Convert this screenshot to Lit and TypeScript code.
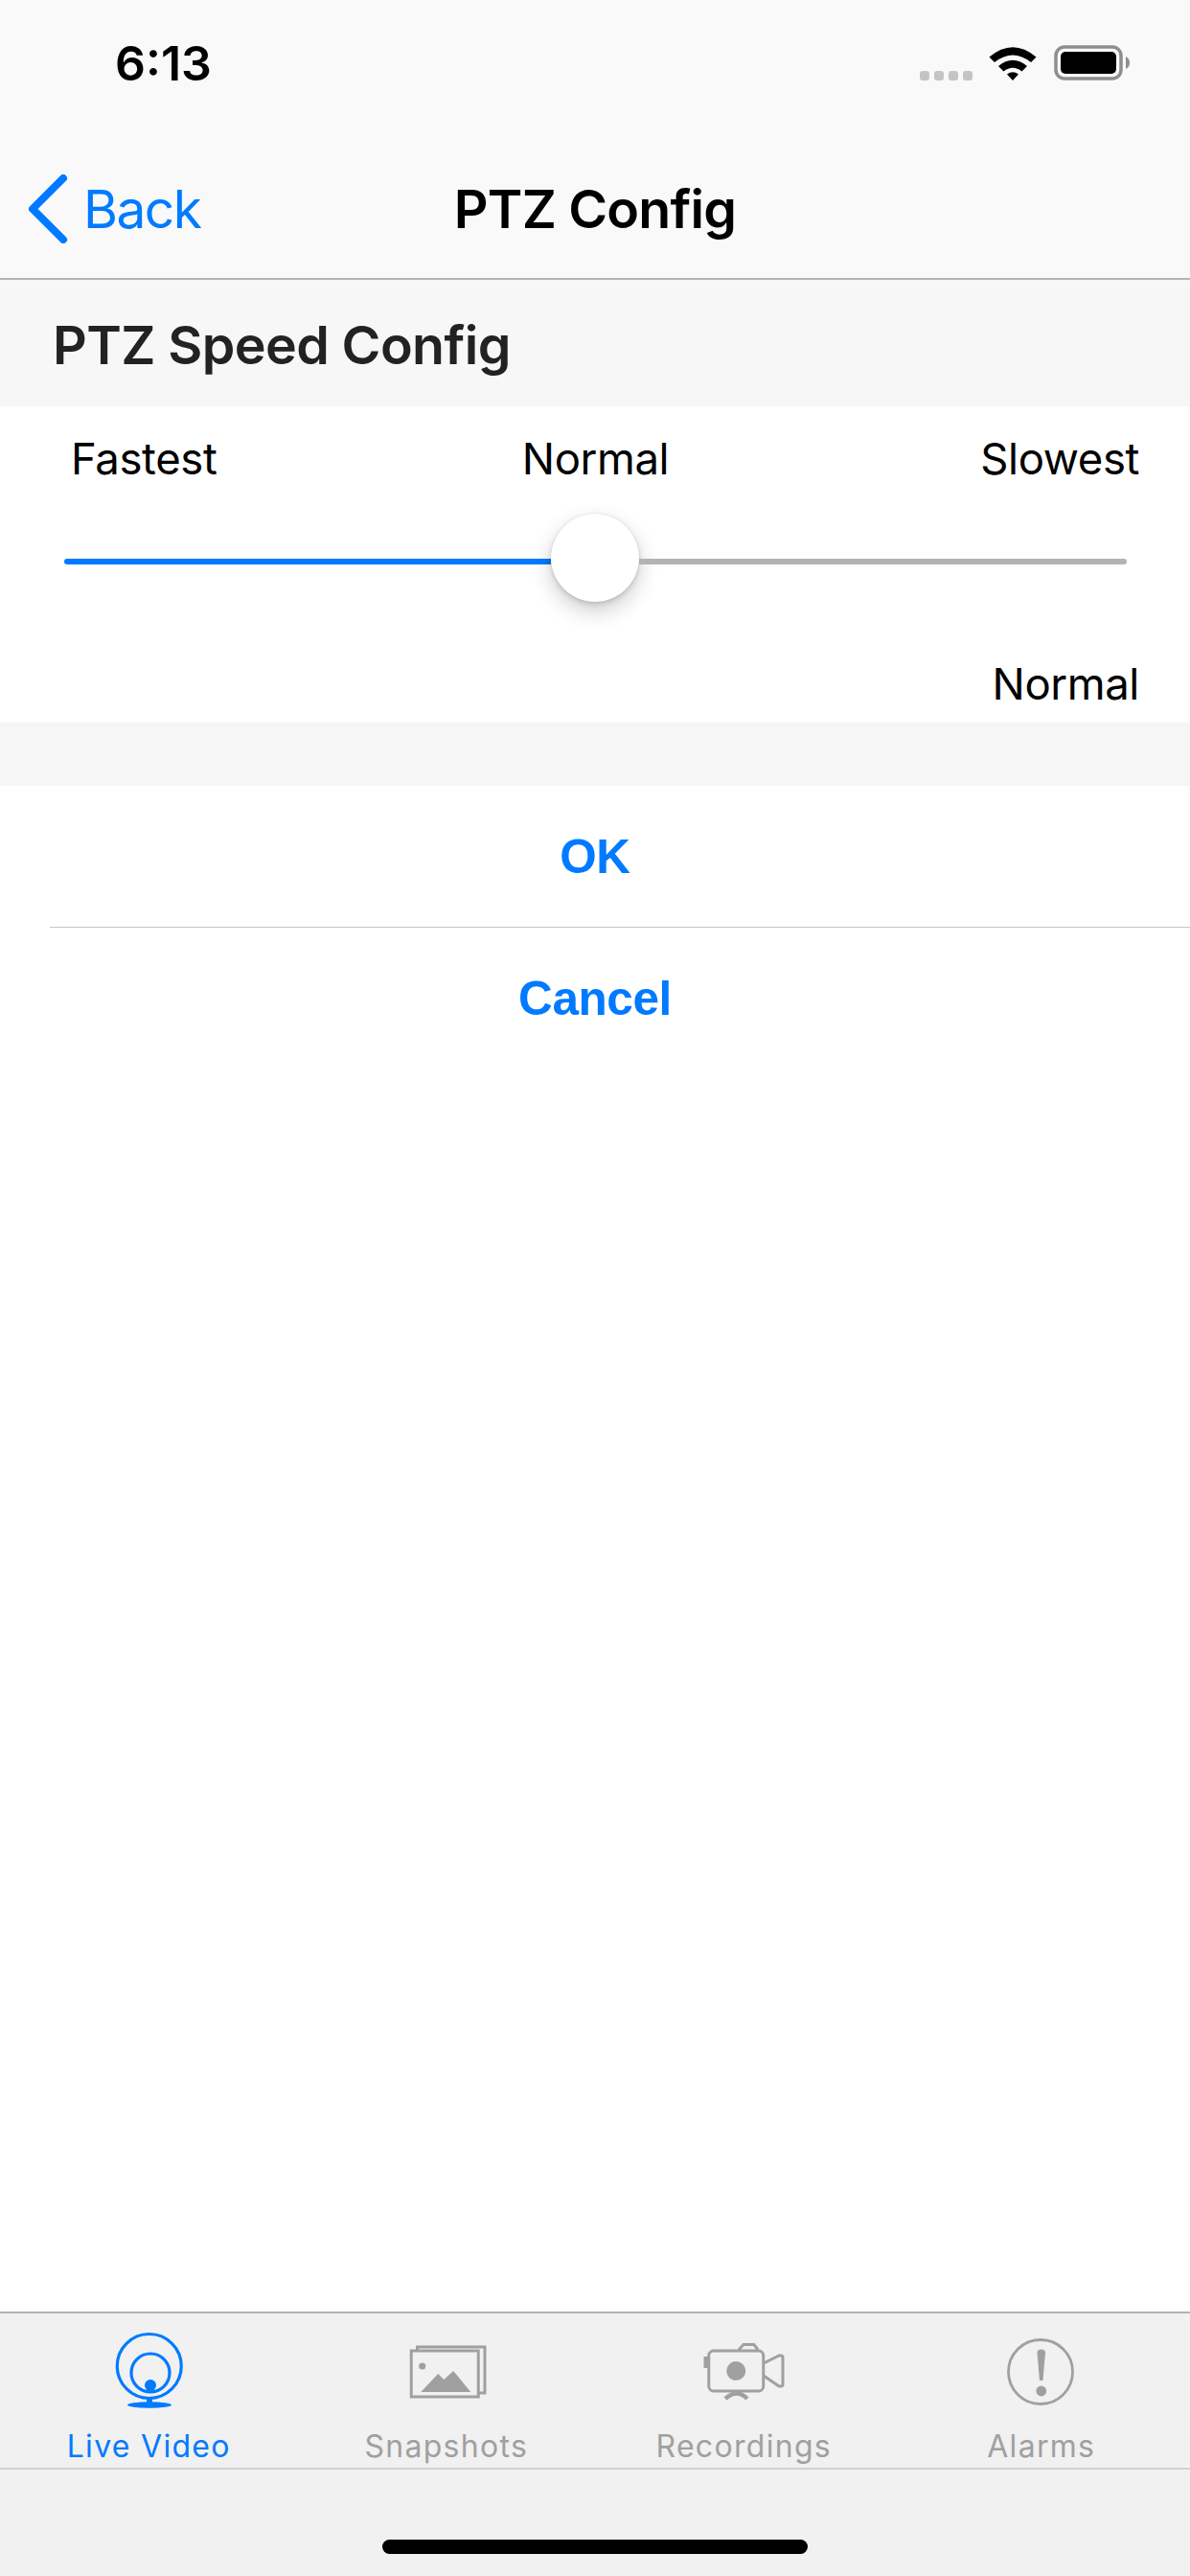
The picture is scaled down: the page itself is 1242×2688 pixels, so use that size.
import { LitElement, html, css, svg } from "lit";
import { customElement } from "lit/decorators.js";

const icons = [
  svg`<circle cx="50.75" cy="40" r="33.5" fill="none" stroke="currentColor" stroke-width="3.2"/>
      <circle cx="52" cy="47" r="20" fill="none" stroke="currentColor" stroke-width="3.2"/>
      <circle cx="52" cy="60" r="6" fill="currentColor"/>
      <rect x="48" y="73" width="6" height="6" fill="currentColor"/>
      <ellipse cx="51" cy="80.5" rx="23" ry="3.2" fill="currentColor"/>`,
  svg`<rect x="13.25" y="24" width="70" height="48" fill="none" stroke="currentColor" stroke-width="3"/>
      <path d="M19.5 23V20H90V68H84" fill="none" stroke="currentColor" stroke-width="3"/>
      <circle cx="24.75" cy="40" r="3.6" fill="currentColor"/>
      <path d="M23.25 67L41.25 48L47.25 54L57.25 45L75.25 67Z" fill="currentColor"/>`,
  svg`<rect x="13.75" y="24" width="57" height="42" rx="5" fill="none" stroke="currentColor" stroke-width="3"/>
      <path d="M45 23L50 17.5H61L65 23" fill="none" stroke="currentColor" stroke-width="3"/>
      <rect x="8.5" y="30" width="4.5" height="12" fill="currentColor"/>
      <circle cx="42.25" cy="45" r="10" fill="currentColor"/>
      <path d="M71 37L87 29H89Q91 29 91 31V59Q91 61 89 61H87L71 50" fill="none" stroke="currentColor" stroke-width="3" stroke-linejoin="round"/>
      <path d="M31 74Q43 63 54 74" fill="none" stroke="currentColor" stroke-width="4.5"/>`,
  svg`<circle cx="49" cy="46" r="33.5" fill="none" stroke="currentColor" stroke-width="2.8"/>
      <path d="M45.5 26Q45.5 22.5 49.8 22.5Q54 22.5 54 26L51.5 55H48Z" fill="currentColor"/>
      <circle cx="49.8" cy="66" r="5.4" fill="currentColor"/>`,
];

const tabs = ["Live Video", "Snapshots", "Recordings", "Alarms"];

@customElement("app-root")
export class AppRoot extends LitElement {
  static styles = css`
    :host { display: flex; flex-direction: column; width: 1242px; height: 2688px; background: #fff; font-family: Inter, "Liberation Sans", sans-serif; color: #000; overflow: hidden; }
    .status { height: 132px; flex: none; background: #f9f9f9; display: flex; justify-content: space-between; align-items: flex-start; padding: 0 62px 0 120px; box-sizing: border-box; }
    .time { font-size: 50px; font-weight: 600; line-height: 54px; margin-top: 39px; }
    .indicators { display: flex; align-items: flex-start; margin-top: 47px; }
    .dots { display: flex; gap: 5px; margin-top: 27px; margin-right: 17px; }
    .dots i { display: block; width: 10px; height: 10px; border-radius: 3px; background: #c4c4c4; }
    .wifi { width: 50px; height: 38px; margin-right: 18px; }
    .battery { width: 80px; height: 38px; }
    .nav { height: 160px; flex: none; box-sizing: border-box; background: #f9f9f9; border-bottom: 2px solid #b4b4b4; display: grid; grid-template-columns: 1fr auto 1fr; align-items: center; padding-top: 14px; }
    .back { display: flex; align-items: center; color: #007aff; font-size: 55px; line-height: 70px; padding-left: 29px; letter-spacing: -1.5px; }
    .back svg { width: 42px; height: 72px; margin-right: 16px; }
    .title { font-size: 55.5px; font-weight: 600; line-height: 70px; letter-spacing: -0.8px; }
    .section { height: 132px; flex: none; box-sizing: border-box; padding-top: 2px; background: #f7f7f7; display: flex; align-items: center; padding-left: 55px; font-size: 55.5px; font-weight: 600; color: #222; letter-spacing: -0.6px; }
    .slider-card { height: 330px; flex: none; display: flex; flex-direction: column; padding: 28px 53px 0 54px; box-sizing: border-box; }
    .labels { display: grid; grid-template-columns: 1fr auto 1fr; font-size: 45.5px; line-height: 54px; letter-spacing: -0.4px; }
    .labels span:first-child { padding-left: 20px; }
    .labels span:last-child { text-align: right; }
    .track-wrap { height: 92px; margin: 34px 13px 0; display: flex; align-items: center; }
    .fill { height: 6px; width: 508px; flex: none; background: #007aff; border-radius: 3px 0 0 3px; }
    .rest { height: 6px; flex: 1; background: #b3b3b3; border-radius: 0 3px 3px 0; }
    .thumb { width: 92px; height: 92px; border-radius: 50%; background: #fff; box-shadow: 0 9px 22px rgba(0,0,0,.2), 0 2px 5px rgba(0,0,0,.14), 0 0 1px rgba(0,0,0,.14); flex: none; margin-top: -8px; }
    .value { text-align: right; font-size: 45.5px; line-height: 54px; margin-top: 55px; letter-spacing: -0.4px; }
    .gap { height: 66px; flex: none; background: #f6f6f6; }
    .action { height: 147px; flex: none; display: flex; align-items: center; justify-content: center; color: #007aff; font-size: 49.5px; font-weight: 700; letter-spacing: -0.4px; font-family: "Liberation Sans", Inter, sans-serif; }
    .sep { height: 1px; flex: none; background: #c4c4c4; margin-left: 52px; }
    .spacer { flex: 1; }
    .tabbar { height: 276px; flex: none; box-sizing: border-box; background: #f1f1f1; border-top: 2px solid #b2b2b2; display: flex; flex-direction: column; }
    .tabs { display: grid; grid-template-columns: repeat(4, 1fr); height: 161px; border-bottom: 2px solid #d2d2d2; box-sizing: content-box; }
    .tab { display: flex; flex-direction: column; align-items: center; color: #a0a0a0; }
    .tab.active { color: #007aff; }
    .tab svg { width: 100px; height: 90px; margin-top: 15px; }
    .tab span { font-size: 32px; line-height: 36px; margin-top: 16px; letter-spacing: 1.3px; font-weight: 400; }
    .home-row { flex: 1; display: flex; justify-content: center; align-items: flex-start; padding-top: 73px; }
    .home { width: 444px; height: 15px; border-radius: 8px; background: #000; }
  `;

  render() {
    return html`
      <div class="status">
        <div class="time">6:13</div>
        <div class="indicators">
          <div class="dots"><i></i><i></i><i></i><i></i></div>
          <svg class="wifi" viewBox="0 0 50 38">
            <path d="M0.5 12.5Q25 -8 49.5 12.5L44 18Q25 3 6 18Z" fill="#000"/>
            <path d="M10 22Q25 9.5 40 22L34.5 27.5Q25 20 15.5 27.5Z" fill="#000"/>
            <path d="M19 30.5Q25 26 31 30.5L25 37Z" fill="#000"/>
          </svg>
          <svg class="battery" viewBox="0 0 80 38">
            <rect x="2" y="2" width="68" height="33" rx="9" fill="none" stroke="#8e8e8e" stroke-width="3.5"/>
            <rect x="7" y="7" width="58" height="23" rx="5" fill="#000"/>
            <path d="M75 12Q79 14 79 18.5Q79 23 75 25Z" fill="#8e8e8e"/>
          </svg>
        </div>
      </div>
      <div class="nav">
        <div class="back">
          <svg viewBox="0 0 42 72"><path d="M37 4L5 36L37 68" fill="none" stroke="#007aff" stroke-width="8" stroke-linecap="round" stroke-linejoin="round"/></svg>
          <span>Back</span>
        </div>
        <div class="title">PTZ Config</div>
        <div></div>
      </div>
      <div class="section">PTZ Speed Config</div>
      <div class="slider-card">
        <div class="labels"><span>Fastest</span><span>Normal</span><span>Slowest</span></div>
        <div class="track-wrap">
          <div class="fill"></div>
          <div class="thumb"></div>
          <div class="rest"></div>
        </div>
        <div class="value">Normal</div>
      </div>
      <div class="gap"></div>
      <div class="action">OK</div>
      <div class="sep"></div>
      <div class="action">Cancel</div>
      <div class="spacer"></div>
      <div class="tabbar">
        <div class="tabs">
          ${tabs.map(
            (t, i) => html`<div class="tab ${i === 0 ? "active" : ""}">
              <svg viewBox="0 0 100 90">${icons[i]}</svg>
              <span>${t}</span>
            </div>`
          )}
        </div>
        <div class="home-row"><div class="home"></div></div>
      </div>
    `;
  }
}
